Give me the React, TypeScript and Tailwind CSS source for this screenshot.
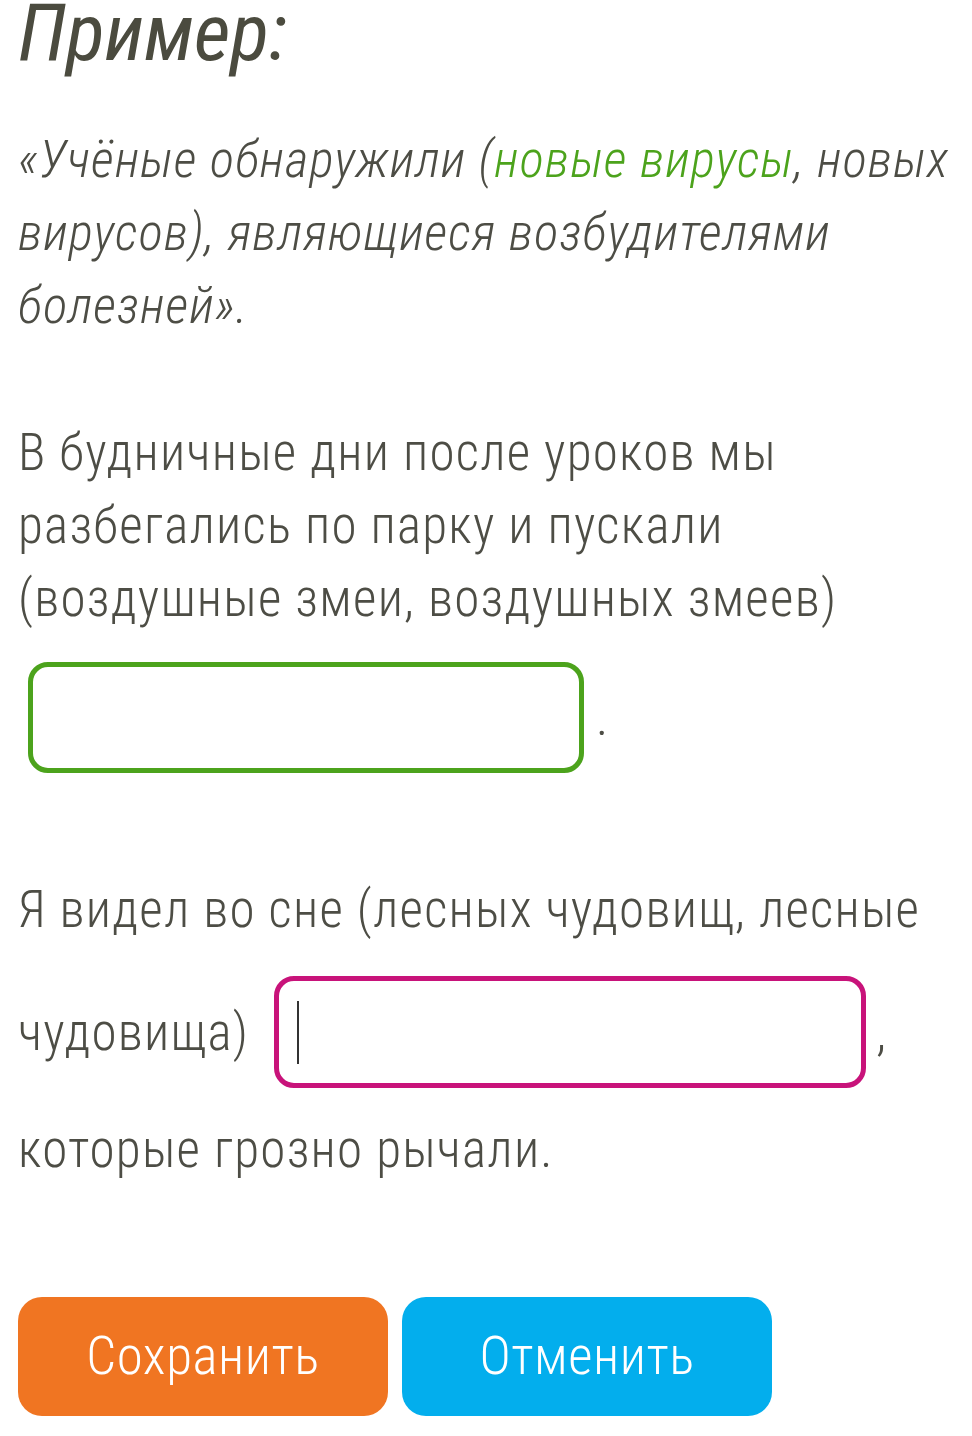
export default function App() {
  return (
    <div
      className="min-h-screen w-full bg-white pl-[18px] pr-[6px] text-[#4d4d45] font-light font-stretch-condensed"
      style={{ fontFamily: "Roboto, 'Noto Sans', sans-serif" }}
    >
      <h2 className="h-[66px] text-[80px] leading-[66px] italic font-normal text-[#4b4b3f]">
        Пример:
      </h2>

      <p className="mt-[57px] text-[51px] leading-[73px] italic tracking-[0.02em]">
        «Учёные обнаружили (<span className="text-[#4ca31c]">новые вирусы</span>, новых
        вирусов), являющиеся возбудителями болезней».
      </p>

      <p className="mt-[74px] text-[51px] leading-[73px] tracking-[0.025em]">
        В будничные дни после уроков мы разбегались по парку и пускали (воздушные змеи,
        воздушных змеев)
      </p>
      <div className="mt-[27px] flex items-center">
        <div className="ml-[10px] h-[111px] w-[556px] rounded-[20px] border-[5px] border-[#4ca31c]" />
        <span className="ml-[12px] text-[51px] leading-[73px]">.</span>
      </div>

      <p className="mt-[100px] text-[51px] leading-[73px] tracking-[0.025em]">
        Я видел во сне (лесных чудовищ, лесные
      </p>
      <div className="mt-[30px] flex items-center">
        <span className="text-[51px] leading-[73px] tracking-[0.025em]">чудовища)</span>
        <div className="ml-[25px] flex h-[112px] w-[592px] items-center rounded-[20px] border-[5px] border-[#c8137a] pl-[18px]">
          <div className="h-[63px] w-[2px] bg-[#333]" />
        </div>
        <span className="ml-[10px] text-[51px] leading-[73px]">,</span>
      </div>
      <p className="mt-[25px] text-[51px] leading-[73px] tracking-[0.025em]">
        которые грозно рычали.
      </p>

      <div className="mt-[111px] flex gap-[14px]">
        <button className="h-[119px] w-[370px] rounded-[24px] bg-[#f07522] text-[53px] font-light tracking-[0.01em] text-white">
          Сохранить
        </button>
        <button className="h-[119px] w-[370px] rounded-[24px] bg-[#03aeed] text-[53px] font-light tracking-[0.01em] text-white">
          Отменить
        </button>
      </div>
    </div>
  );
}
